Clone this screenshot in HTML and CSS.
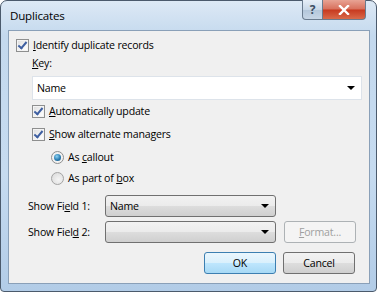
FILE: index.html
```html
<!DOCTYPE html>
<html>
<head>
    <title>Duplicates</title>
    <link rel="stylesheet" href="styles.css">
</head>
<body>
    <div class="window">
        <div class="titlebar">
            <span class="title">Duplicates</span>
            <div class="caption-btns">
                <div class="cap help">?</div>
                <div class="cap close">
                    <svg width="14" height="10" viewBox="0 0 14 10"><path d="M3 1 L11 9 M11 1 L3 9" stroke="#fff" stroke-width="2.4" stroke-linecap="square"/></svg>
                </div>
            </div>
        </div>

        <div class="client">
            <label class="row first">
                <span class="check on"></span><span><u>I</u>dentify duplicate records</span>
            </label>
            <div class="row indent key"><span><u>K</u>ey:</span></div>
            <div class="combo-wide indent">
                <span>Name</span><span class="arrow"></span>
            </div>
            <label class="row indent r-auto">
                <span class="check on"></span><span><u>A</u>utomatically update</span>
            </label>
            <label class="row indent r-show">
                <span class="check on"></span><span><u>S</u>how alternate managers</span>
            </label>
            <label class="row indent2 r-radio1">
                <span class="radio on"></span><span>As <u>c</u>allout</span>
            </label>
            <label class="row indent2 r-radio2">
                <span class="radio"></span><span>As part of <u>b</u>ox</span>
            </label>

            <div class="field-row f1">
                <span class="field-label">Show Fi<u>e</u>ld 1:</span>
                <div class="dropdown"><span>Name</span><span class="arrow"></span></div>
            </div>
            <div class="field-row f2">
                <span class="field-label">Show Fiel<u>d</u> 2:</span>
                <div class="dropdown"><span></span><span class="arrow"></span></div>
                <div class="btn disabled"><u>F</u>ormat...</div>
            </div>
            <div class="buttons">
                <div class="btn default">OK</div>
                <div class="btn">Cancel</div>
            </div>
        </div>
    </div>
</body>
</html>
```

FILE: styles.css
```css
body {
    margin: 0;
    font-family: "Open Sans", "Noto Sans", sans-serif;
    font-size: 10.6px;
    letter-spacing: -0.2px;
    color: #000;
    background: #fff;
}
.window {
    width: 375px;
    height: 290px;
    border: 1px solid #4b5a6c;
    border-radius: 7px 7px 4px 4px;
    background: linear-gradient(180deg, #dde9f5 0%, #c4d9ee 12%, #c6dbf0 60%, #b2cce7 100%);
    display: flex;
    flex-direction: column;
}
.titlebar {
    height: 29px;
    display: flex;
    justify-content: space-between;
    padding-left: 9px;
}
.title {
    font-size: 11.6px;
    line-height: 30px;
}
.caption-btns {
    display: flex;
    margin-right: 10px;
    margin-top: -1px;
}
.cap {
    height: 19px;
    border: 1px solid #6a7b8e;
    border-top: none;
    display: flex;
    align-items: center;
    justify-content: center;
}
.help {
    width: 19px;
    border-radius: 0 0 0 4px;
    background: linear-gradient(180deg, #e6eef7 0%, #c9d8e8 50%, #b3c6da 51%, #c7d6e6 100%);
    color: #3d4e63;
    font-size: 12px;
    font-weight: bold;
}
.close {
    width: 42px;
    border-left: none;
    border-radius: 0 0 4px 0;
    background: linear-gradient(180deg, #e8a394 0%, #d8705c 48%, #c7391f 52%, #d96a4a 100%);
}
.client {
    margin: 0 6px 0 7px;
    height: 252px;
    background: #f0f0f0;
    border: 1px solid #8aa0b8;
    display: flex;
    flex-direction: column;
    padding: 0 7px 0 7px;
}
.row {
    display: flex;
    align-items: center;
    height: 16px;
    gap: 4px;
}
.first { margin-top: 6px; }
.indent { margin-left: 16px; }
.indent2 { margin-left: 35px; }
.key { margin-top: 2px; }
.r-auto { margin-top: 3px; }
.r-show { margin-top: 7px; }
.r-radio1 { margin-top: 7px; gap: 4px; }
.r-radio2 { margin-top: 5px; gap: 4px; }

.check {
    width: 11px;
    height: 11px;
    border: 1px solid #8e8f8f;
    background: linear-gradient(135deg, #dcdcdc 0%, #f5f5f5 60%, #ffffff 100%);
    box-shadow: inset 0 0 0 1px #f4f4f4;
    position: relative;
}
.check.on::after {
    content: "";
    position: absolute;
    left: 3px;
    top: 0px;
    width: 3px;
    height: 7px;
    border: solid #3e5fa1;
    border-width: 0 2px 2px 0;
    transform: rotate(40deg);
}
.radio {
    width: 11px;
    height: 11px;
    border: 1px solid #a3a3a3;
    border-radius: 50%;
    background: radial-gradient(circle at 60% 60%, #f4f4f4 0%, #d8d8d8 100%);
    position: relative;
}
.radio.on {
    border-color: #8e8f8f;
    background: #f1f1f1;
}
.radio.on::after {
    content: "";
    position: absolute;
    left: 2px;
    top: 2px;
    width: 7px;
    height: 7px;
    border-radius: 50%;
    background: radial-gradient(circle at 40% 35%, #8ed3f3 0%, #2a7db2 55%, #174d77 100%);
}

.combo-wide {
    margin-top: 5px;
    height: 22px;
    background: #fff;
    border: 1px solid #dde3ea;
    display: flex;
    align-items: center;
    justify-content: space-between;
    padding: 0 6px 0 4px;
    box-sizing: content-box;
    width: 318px;
}
.arrow {
    width: 0;
    height: 0;
    border-left: 4px solid transparent;
    border-right: 4px solid transparent;
    border-top: 4px solid #000;
}
.field-row {
    display: flex;
    align-items: center;
    height: 22px;
}
.f1 { margin-top: 9px; }
.f2 { margin-top: 4px; }
.field-label {
    width: 77px;
    margin-left: 12px;
}
.dropdown {
    border: 1px solid #707070;
    border-radius: 3px;
    background: linear-gradient(180deg, #f2f2f2 0%, #ebebeb 50%, #dddddd 51%, #cfcfcf 100%);
    display: flex;
    align-items: center;
    justify-content: space-between;
    padding: 0 6px 0 4px;
    box-sizing: border-box;
    width: 171px;
    height: 22px;
}
.btn {
    width: 72px;
    height: 22px;
    box-sizing: border-box;
    border: 1px solid #707070;
    border-radius: 3px;
    background: linear-gradient(180deg, #f2f2f2 0%, #ebebeb 50%, #dddddd 51%, #cfcfcf 100%);
    display: flex;
    align-items: center;
    justify-content: center;
}
.field-row .btn { margin-left: 8px; }
.btn.disabled {
    color: #a0a0a0;
    border-color: #adb2b5;
    background: #f4f4f4;
}
.btn.default {
    border-color: #3c7fb1;
    background: linear-gradient(180deg, #eaf6fd 0%, #d9f0fc 50%, #bee6fd 51%, #a7d9f5 100%);
}
.buttons {
    display: flex;
    justify-content: flex-end;
    gap: 7px;
    margin-top: 9px;
    margin-right: 7px;
}
```
